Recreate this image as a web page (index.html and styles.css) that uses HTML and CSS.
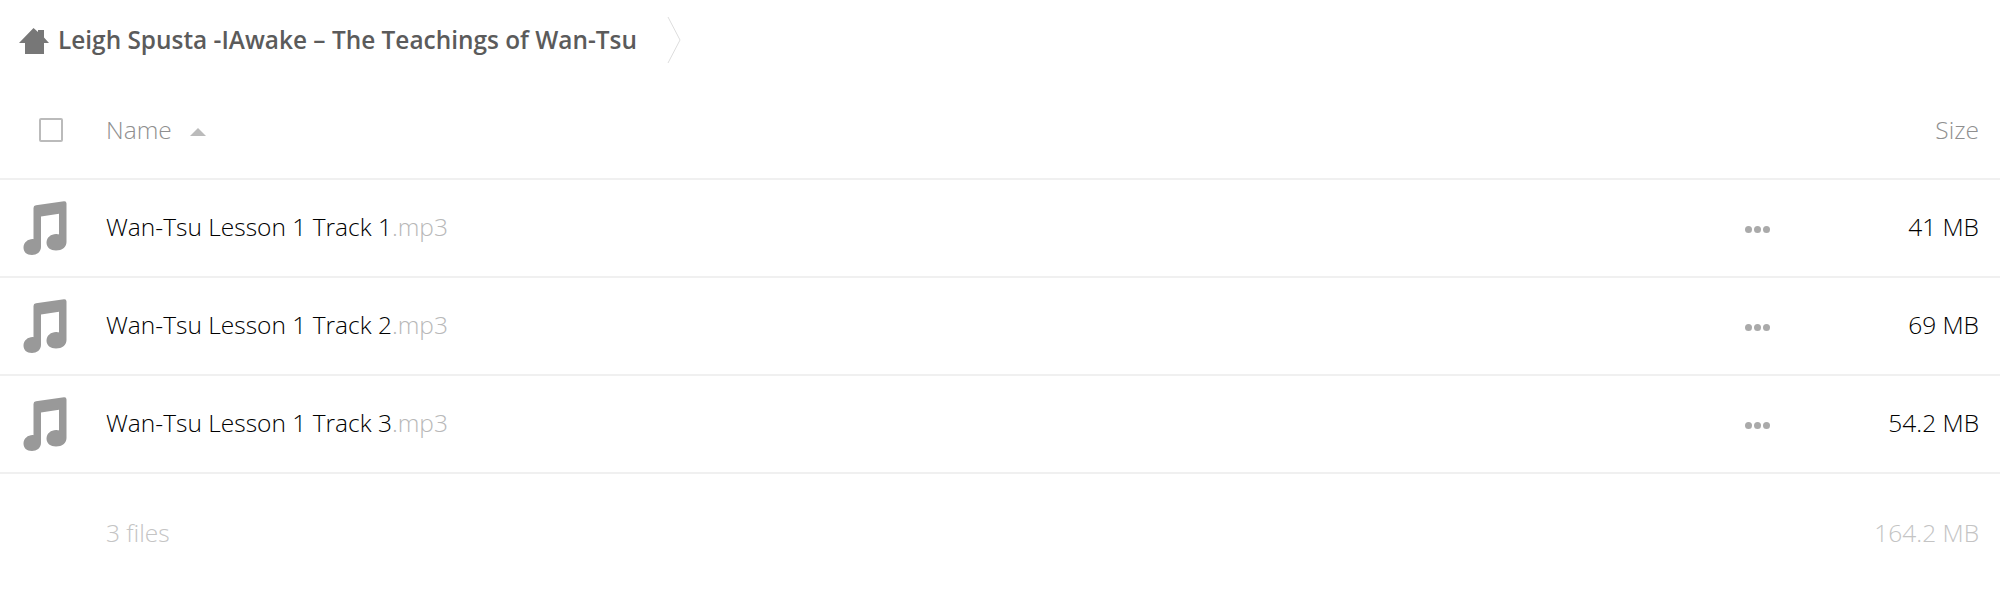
FILE: index.html
```html
<!DOCTYPE html>
<html lang="en">
<head>
  <meta charset="UTF-8" />
  <title>Leigh Spusta -IAwake – The Teachings of Wan-Tsu</title>
  <link rel="stylesheet" href="styles.css">
</head>
<body>
  <div class="breadcrumb">
    <svg class="home-icon" viewBox="0 0 30 26"><path d="M14.500 0L19 4V2H25V9.500L30 15H25V26H6V15H0Z"/></svg>
    <span class="crumb-title">Leigh Spusta -IAwake – The Teachings of Wan-Tsu</span>
    <svg class="crumb-sep" viewBox="0 0 14 46"><path d="M1 0L13 23L1 46"/></svg>
  </div>

  <div class="row head-row">
    <div class="col-icon"><span class="checkbox"></span></div>
    <div class="col-name">Name <span class="sort-arrow"></span></div>
    <div class="col-size">Size</div>
  </div>

  <div class="row file-row">
    <div class="col-icon"><svg class="music-icon" viewBox="0 0 44 54"><path d="M10.500 7Q10.500 4.500 13 4.200L41 0.200Q43.500 0 43.500 2.500V41C43.500 46 39 49.500 33 49.500C27.500 49.500 23.500 46.500 23.500 41.500C23.500 36.500 28 33 33 33C34 33 35.500 33.200 36 33.500V12.800L18 15.500V46C18 51 13.500 54 9 54C3.500 54 0.500 51 0.500 46.500C0.500 41.500 5 38 9.500 38C10 38 10.300 38 10.500 38.200Z"/></svg></div>
    <div class="col-name">Wan-Tsu Lesson 1 Track 1<span class="ext">.mp3</span></div>
    <div class="col-more"><span class="dots"><i></i><i></i><i></i></span></div>
    <div class="col-size">41 MB</div>
  </div>
  <div class="row file-row">
    <div class="col-icon"><svg class="music-icon" viewBox="0 0 44 54"><path d="M10.500 7Q10.500 4.500 13 4.200L41 0.200Q43.500 0 43.500 2.500V41C43.500 46 39 49.500 33 49.500C27.500 49.500 23.500 46.500 23.500 41.500C23.500 36.500 28 33 33 33C34 33 35.500 33.200 36 33.500V12.800L18 15.500V46C18 51 13.500 54 9 54C3.500 54 0.500 51 0.500 46.500C0.500 41.500 5 38 9.500 38C10 38 10.300 38 10.500 38.200Z"/></svg></div>
    <div class="col-name">Wan-Tsu Lesson 1 Track 2<span class="ext">.mp3</span></div>
    <div class="col-more"><span class="dots"><i></i><i></i><i></i></span></div>
    <div class="col-size">69 MB</div>
  </div>
  <div class="row file-row">
    <div class="col-icon"><svg class="music-icon" viewBox="0 0 44 54"><path d="M10.500 7Q10.500 4.500 13 4.200L41 0.200Q43.500 0 43.500 2.500V41C43.500 46 39 49.500 33 49.500C27.500 49.500 23.500 46.500 23.500 41.500C23.500 36.500 28 33 33 33C34 33 35.500 33.200 36 33.500V12.800L18 15.500V46C18 51 13.500 54 9 54C3.500 54 0.500 51 0.500 46.500C0.500 41.500 5 38 9.500 38C10 38 10.300 38 10.500 38.200Z"/></svg></div>
    <div class="col-name">Wan-Tsu Lesson 1 Track 3<span class="ext">.mp3</span></div>
    <div class="col-more"><span class="dots"><i></i><i></i><i></i></span></div>
    <div class="col-size">54.2 MB</div>
  </div>

  <div class="row summary-row">
    <div class="col-icon"></div>
    <div class="col-name">3 files</div>
    <div class="col-size">164.2 MB</div>
  </div>
</body>
</html>
```
FILE: styles.css
```css
html, body { margin: 0; padding: 0; }
body { font-family: "Open Sans", Arial, sans-serif; font-weight: 300; font-size: 24.5px; color: #000; background: #fff; overflow: hidden; }

.breadcrumb { display: flex; align-items: center; height: 80px; padding-left: 19px; }
.home-icon { width: 30px; height: 26px; margin-right: 9px; margin-top: 1px; fill: #777; }
.crumb-title { font-weight: 600; font-size: 24.4px; color: #5b5b5b; margin-top: -2px; }
.crumb-sep { width: 14px; height: 46px; margin-left: 30px; fill: none; stroke: #ddd; stroke-width: 1; }

.row { display: flex; align-items: center; padding-right: 21px; border-bottom: 2px solid #f0f0f0; box-sizing: border-box; }
.head-row { height: 100px; color: #8f8f8f; }
.file-row { height: 98px; }
.file-row .col-name, .file-row .col-size { margin-top: -3px; }
.summary-row { height: 118px; border-bottom: none; color: #c4c4c4; }
.summary-row .col-name, .summary-row .col-size { margin-top: -2px; }

.col-icon { width: 106px; display: flex; flex-shrink: 0; padding-left: 23px; box-sizing: border-box; }
.col-name { flex: 1; }
.col-more { width: 90px; }
.col-size { width: 144px; text-align: right; }

.checkbox { display: block; width: 20px; height: 20px; margin-left: 16px; margin-top: 2px; border: 2px solid #bbb; border-radius: 2px; }
.sort-arrow { display: inline-block; margin-left: 12px; vertical-align: 3px; border-left: 8px solid transparent; border-right: 8px solid transparent; border-bottom: 8px solid #bbb; }
.music-icon { width: 44px; height: 54px; fill: #999; margin-top: -1px; }
.ext { color: #b8b8b8; }
.dots { display: flex; gap: 2px; margin-top: 3px; }
.dots i { display: block; width: 7px; height: 7px; border-radius: 50%; background: #aaa; }
```
